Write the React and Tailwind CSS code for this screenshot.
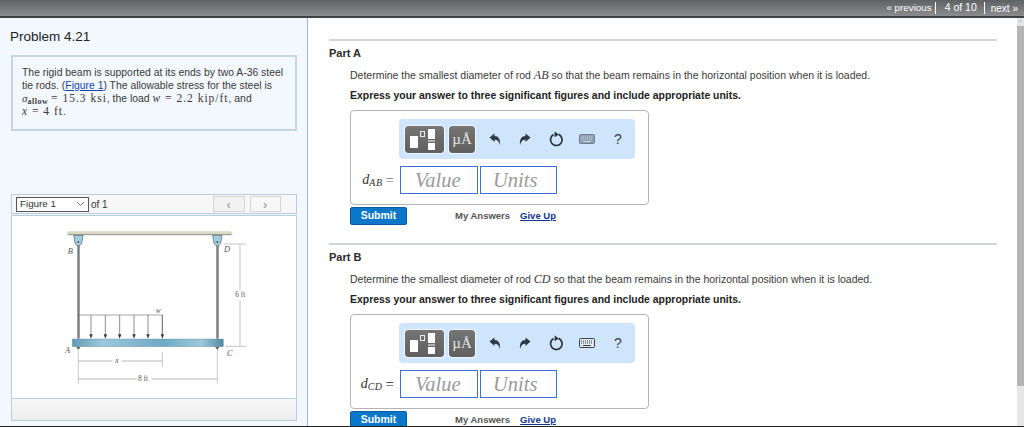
const sans = { fontFamily: '"Liberation Sans", Arial, sans-serif' }

function Math({ children, className = '' }) {
  return <span className={`font-['Liberation_Serif',serif] ${className}`}>{children}</span>
}

function TemplateIcon() {
  return (
    <svg width="39" height="27" viewBox="0 0 39 27">
      <rect x="5" y="10" width="8" height="12" fill="#fff" />
      <rect x="15.5" y="5.5" width="4" height="5" fill="none" stroke="#e8e8e8" strokeWidth="1" />
      <rect x="23" y="3" width="7" height="10" fill="#fff" />
      <rect x="23" y="14.5" width="7" height="1" fill="#fff" />
      <rect x="23" y="17" width="7" height="7" fill="#fff" />
    </svg>
  )
}

function ArrowIcon({ flip }) {
  return (
    <svg width="12" height="13" viewBox="0 0 12 13" className={flip ? '-scale-x-100' : ''}>
      <path d="M0.5 4.5 L5.5 0.5 L5.5 3 C9.5 3 11.5 6 11 12 C10 8.5 8.5 6.8 5.5 6.8 L5.5 9 Z" fill="#2f3a44" />
    </svg>
  )
}

function ResetIcon() {
  return (
    <svg width="15" height="16" viewBox="0 0 15 16">
      <path d="M9.6 3.4 A5.8 5.8 0 1 1 4.6 3.6" fill="none" stroke="#27313a" strokeWidth="1.7" />
      <path d="M5.6 0.4 L9.8 3.4 L5.6 6.2 Z" fill="#27313a" />
    </svg>
  )
}

function KeyboardIcon({ dim }) {
  return (
    <svg width="16" height="10" viewBox="0 0 16 10">
      <rect x="0.5" y="0.5" width="15" height="9" rx="1" fill={dim ? '#8ea0b2' : '#dfe7ef'} stroke={dim ? '#6d7e8f' : '#39444f'} />
      <path d="M2 3h12M2 5h12" stroke={dim ? '#c8d3de' : '#39444f'} strokeWidth="1" strokeDasharray="1 1" />
      <path d="M4 7.5h8" stroke={dim ? '#c8d3de' : '#39444f'} strokeWidth="1" />
    </svg>
  )
}

function Part({ name, rod, sub, dim }) {
  return (
    <section>
      <div className="h-[2px] bg-[#d3d6d9]" />
      <h3 className="mt-[5px] text-[11px] leading-[14px] font-bold text-[#2b2b2b]">{name}</h3>
      <div className="ml-[21px]">
        <p className="mt-[8px] text-[10.5px] leading-[14px] text-[#3a3a3a]">
          Determine the smallest diameter of rod <Math className="text-[12px] italic">{rod}</Math> so that the beam remains in the horizontal position when it is loaded.
        </p>
        <p className="mt-[7px] text-[10.45px] leading-[14px] font-bold text-[#222]">
          Express your answer to three significant figures and include appropriate units.
        </p>
        <div className="mt-[7px] h-[95px] w-[299px] rounded-[4px] border border-[#b4b4b4] bg-white">
          <div className="mt-[8px] ml-[48px] flex h-[40px] w-[236px] items-center rounded-[4px] bg-[#cfe5fc] pl-[6px]">
            <div className="flex h-[27px] w-[39px] items-center justify-center rounded-[3px] bg-gradient-to-b from-[#757575] to-[#5f5f5f] outline outline-white/70">
              <TemplateIcon />
            </div>
            <div className="ml-[5px] flex h-[27px] w-[26px] items-center justify-center rounded-[3px] bg-gradient-to-b from-[#757575] to-[#5f5f5f] font-['Liberation_Serif',serif] text-[15px] text-[#e4e4e4] outline outline-white/70">
              µÅ
            </div>
            <div className="ml-[14px]"><ArrowIcon /></div>
            <div className="ml-[18px]"><ArrowIcon flip /></div>
            <div className="ml-[18px]"><ResetIcon /></div>
            <div className="ml-[15px]"><KeyboardIcon dim={dim} /></div>
            <div className="ml-[19px] text-[14px] text-[#3a3f45]">?</div>
          </div>
          <div className="mt-[7px] flex items-center">
            <div className="flex w-[49px] justify-end pr-[6px] font-['Liberation_Serif',serif] text-[14px] text-[#333]">
              <span className="italic">d<sub className="text-[10px] tracking-[0.5px]">{sub}</sub></span>
              <span className={`ml-[3px] text-[15px] ${dim ? 'text-[#777]' : 'text-[#222]'}`}>=</span>
            </div>
            <div className="flex h-[28px] w-[78px] items-center border border-[#3f6fd1] pl-[14px] font-['Liberation_Serif',serif] text-[20.5px] text-[#9a9a9a] italic">
              Value
            </div>
            <div className="ml-[2px] flex h-[28px] w-[77px] items-center border border-[#3f6fd1] pl-[12px] font-['Liberation_Serif',serif] text-[20.5px] text-[#9a9a9a] italic">
              Units
            </div>
          </div>
        </div>
        <div className="mt-[2px] flex h-[18px] items-center">
          <button className="h-[18px] w-[57px] rounded-[2px] border border-[#0a5c9e] bg-[#0b77c9] text-[10.5px] font-bold text-white">Submit</button>
          <span className="ml-[48px] text-[9.5px] font-bold text-[#555]">My Answers</span>
          <a className="ml-[10px] text-[9.5px] font-bold text-[#12358f] underline">Give Up</a>
        </div>
      </div>
    </section>
  )
}

function BeamFigure() {
  const arrows = [90, 133, 176, 219, 261, 304]
  return (
    <svg width="200" height="160" viewBox="0 0 600 480" className="block">
      <defs>
        <linearGradient id="beam" x1="0" x2="1">
          <stop offset="0" stopColor="#5d9cb6" />
          <stop offset="0.2" stopColor="#9cc9db" />
          <stop offset="0.6" stopColor="#6eaac4" />
          <stop offset="0.85" stopColor="#9cc9db" />
          <stop offset="1" stopColor="#4f8ba6" />
        </linearGradient>
      </defs>
      <path d="M20 25 Q14 18 26 16 H505 Q520 18 512 25 Z" fill="#d9d9c6" />
      <path d="M20 26 H512" stroke="#555" strokeWidth="2" />
      {[52, 469].map((x) => (
        <g key={x}>
          <path d={`M${x - 14} 28 H${x + 14} L${x + 10} 52 Q${x} 68 ${x - 10} 52 Z`} fill="#9fd0e2" stroke="#555" strokeWidth="2" />
          <circle cx={x} cy="48" r="3" fill="#555" />
          <rect x={x - 3} y="58" width="7" height="280" fill="#77797a" />
          <path d={`M${x - 7} 362 H${x + 7} L${x} 372 Z`} fill="#666" />
        </g>
      ))}
      <rect x="34" y="339" width="453" height="23" fill="url(#beam)" stroke="#5b7f90" />
      <path d="M54 267 H304 V325" fill="none" stroke="#777" strokeWidth="2" />
      {arrows.map((x) => (
        <g key={x}>
          <path d={`M${x} 267 V326`} stroke="#555" strokeWidth="2" />
          <path d={`M${x - 5} 325 H${x + 5} L${x} 338 Z`} fill="#333" />
        </g>
      ))}
      <path d="M489 54 H555 M493 361 H555 M537 54 V194 M537 222 V361 M52 375 V475 M469 372 V475 M304 378 V422" stroke="#aaa" strokeWidth="2" fill="none" />
      <path d="M52 405 H155 M182 405 H304 M52 459 H228 M272 459 H469" stroke="#999" strokeWidth="2" fill="none" />
      <g fontFamily="Liberation Serif, serif" fill="#555" fontSize="25">
        <text x="20" y="84" fontStyle="italic">B</text>
        <text x="489" y="78" fontStyle="italic">D</text>
        <text x="12" y="382" fontStyle="italic">A</text>
        <text x="498" y="390" fontStyle="italic">C</text>
        <text x="284" y="262" fontStyle="italic" fontSize="22">w</text>
        <text x="163" y="412" fontStyle="italic" fontSize="23">x</text>
        <text x="231" y="466" fontSize="22">8 ft</text>
        <text x="523" y="214" fontSize="22">6 ft</text>
      </g>
    </svg>
  )
}

export default function App() {
  return (
    <div className="flex h-[427px] w-[1024px] flex-col overflow-hidden bg-white" style={sans}>
      <header className="flex h-[18px] items-center justify-end border-b-2 border-[#3f4244] bg-gradient-to-b from-[#5f6263] to-[#8b8d8e] pr-[6px] text-[10px] text-white">
        <span className="text-[9.8px] whitespace-nowrap">« previous</span>
        <span className="ml-[3px] h-[12px] border-l border-white" />
        <span className="ml-[5px] px-[4px] text-[10.5px] whitespace-nowrap">4 of 10</span>
        <span className="ml-[3px] h-[12px] border-l border-white" />
        <span className="ml-[6px] whitespace-nowrap">next »</span>
      </header>

      <div className="flex min-h-0 flex-1">
        <aside className="w-[308px] shrink-0 border-r border-[#9fb4c7] bg-[#f3f8fe] pl-[11px]">
          <h2 className="mt-[10px] -ml-px text-[13.5px] leading-[17px] text-[#222]">Problem 4.21</h2>
          <div className="mt-[10px] h-[76px] w-[286px] border-2 border-[#c3d6e6] bg-[#f3f8fe] px-[9px] pt-[9px] text-[10.4px] leading-[13px] text-[#3a3a3a]">
            The rigid beam is supported at its ends by two A-36 steel tie rods. (<a className="text-[#1246a8] underline">Figure 1</a>) The allowable stress for the steel is <Math className="text-[11px] italic">σ<sub className="text-[8px] font-bold tracking-[0.5px] not-italic">allow</sub></Math> <Math className="text-[11.5px] tracking-[1px]">= 15.3 ksi</Math>, the load <Math className="text-[11.5px] tracking-[1px]"><i>w</i> = 2.2 kip/ft</Math>, and<br />
            <Math className="text-[11.5px] tracking-[1px]"><i>x</i> = 4 ft</Math>.
          </div>
          <div className="mt-[63px] flex h-[20px] w-[286px] items-center border border-[#b5cde0] bg-[#f7f7f7] pl-[4px]">
            <div className="flex h-[15px] w-[73px] shrink-0 items-center justify-between border border-[#555] bg-white px-[3px] text-[9.8px] leading-none text-[#333]">
              Figure 1
              <svg width="9" height="6" viewBox="0 0 9 6"><path d="M1 1l3.5 3.5L8 1" fill="none" stroke="#777" /></svg>
            </div>
            <span className="ml-[2px] text-[10px] whitespace-nowrap text-[#333]">of 1</span>
            <div className="ml-[105px] flex h-[16px] w-[32px] shrink-0 items-center justify-center border border-[#d5d5d5] bg-[#f2f2f2] text-[13px] leading-none font-bold text-[#aaa]">‹</div>
            <div className="ml-[5px] flex h-[16px] w-[31px] shrink-0 items-center justify-center border border-[#d5d5d5] bg-[#f7f7f7] text-[13px] leading-none font-bold text-[#aaa]">›</div>
          </div>
          <div className="mt-[1px] h-[206px] w-[286px] border border-[#b5cde0] bg-white">
            <div className="h-[183px] border-b border-[#b5cde0] pt-[10px] pl-[49px]">
              <BeamFigure />
            </div>
            <div className="h-[21px] bg-gradient-to-b from-[#f8f8f8] to-[#ececec]" />
          </div>
        </aside>

        <main className="min-w-0 flex-1 overflow-hidden pt-[21px] pr-[20px] pl-[21px]">
          <Part name="Part A" rod="AB" sub="AB" dim />
          <div className="h-[18px]" />
          <Part name="Part B" rod="CD" sub="CD" />
        </main>

        <div className="flex w-[7px] shrink-0 flex-col bg-[#e6e6e6]">
          <div className="h-[8px] text-center text-[6px] leading-[8px] text-[#999]">^</div>
          <div className="h-[360px] bg-[#b4b4b4]" />
        </div>
      </div>
      <div className="h-[1px] bg-[#222]" />
    </div>
  )
}
